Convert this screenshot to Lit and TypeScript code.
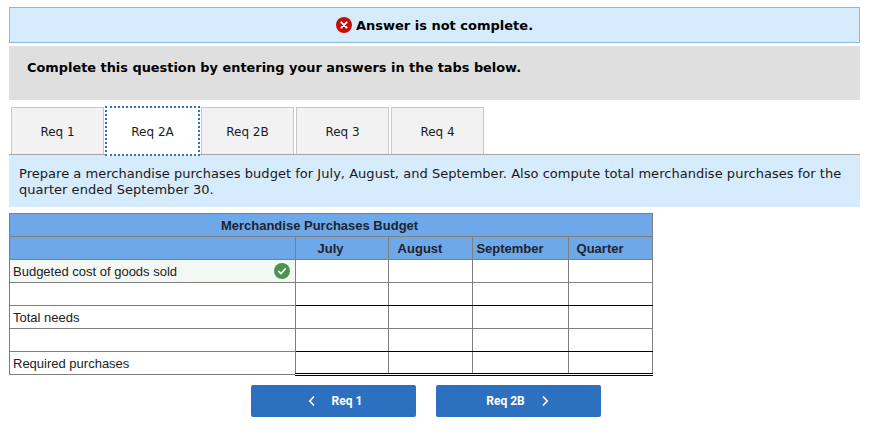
import { LitElement, html, css } from "lit";
import { customElement } from "lit/decorators.js";

const TABS = ["Req 1", "Req 2A", "Req 2B", "Req 3", "Req 4"];
const COLS = ["July", "August", "September", "Quarter"];
const ROWS = [
  { label: "Budgeted cost of goods sold", ok: true, cls: "" },
  { label: "", ok: false, cls: "above" },
  { label: "Total needs", ok: false, cls: "" },
  { label: "", ok: false, cls: "above" },
  { label: "Required purchases", ok: false, cls: "last" },
];

@customElement("app-root")
export class AppRoot extends LitElement {
  static styles = css`
    :host {
      display: block;
      box-sizing: border-box;
      width: 889px;
      height: 434px;
      padding: 7px 29px 0 9px;
      background: #fff;
      font-family: "DejaVu Sans", Verdana, sans-serif;
      color: #1a1a1a;
      overflow: hidden;
    }
    .banner {
      display: flex;
      align-items: center;
      justify-content: center;
      gap: 4px;
      height: 36px;
      box-sizing: border-box;
      background: #d6ebfb;
      border: 1px solid #8ab8de;
      font-size: 13px;
      font-weight: 700;
      color: #000;
    }
    .banner svg {
      display: block;
    }
    .prompt {
      box-sizing: border-box;
      height: 54px;
      margin-top: 3px;
      padding: 13px 18px;
      background: #dfdfdf;
      font-size: 12.9px;
      line-height: 18px;
      font-weight: 700;
      color: #000;
    }
    .tabs {
      display: flex;
      gap: 2px;
      height: 48px;
      box-sizing: border-box;
      margin-top: 7px;
      padding-left: 2px;
      border-bottom: 1px solid #a6a6a6;
    }
    .tab {
      box-sizing: border-box;
      width: 93px;
      height: 47px;
      padding-top: 1px;
      display: flex;
      align-items: center;
      justify-content: center;
      background: #f2f2f2;
      border: 1px solid #c8c8c8;
      border-bottom: none;
      font-size: 12px;
    }
    .tab.active {
      position: relative;
      z-index: 1;
      height: 50px;
      width: 95px;
      margin: -1px -1px 0;
      padding: 2px 0 0;
      background: #fff;
      border: 2px dotted #2d70c0;
    }
    .intro {
      box-sizing: border-box;
      height: 52px;
      padding: 11px 10px 0;
      background: #d6ebfb;
      font-size: 13px;
      line-height: 16px;
      letter-spacing: 0.03px;
    }
    table {
      margin-top: 6px;
      border-collapse: collapse;
      table-layout: fixed;
      width: 643px;
      font-family: "Liberation Sans", Arial, sans-serif;
      font-size: 13px;
      color: #222;
    }
    th,
    td {
      height: 23px;
      box-sizing: border-box;
      padding: 0;
      border: 1px solid #7f7f7f;
    }
    th {
      padding-right: 21px;
      background: #6ea8e8;
      font-size: 13px;
      color: #1c2430;
    }
    th.wide {
      padding-right: 23px;
    }
    td.name {
      padding: 0 3px;
    }
    td.name.ok {
      background: #f3f8f5;
    }
    .name-in {
      display: flex;
      align-items: center;
      justify-content: space-between;
      padding-right: 2px;
    }
    .name-in span {
      padding-top: 1px;
    }
    tr.above td.num {
      border-bottom: 1px solid #000;
    }
    tr.last td.num {
      border-bottom: 3px double #000;
    }
    .nav {
      display: flex;
      gap: 20px;
      margin: 9px 0 0 242px;
    }
    .btn {
      box-sizing: border-box;
      width: 165px;
      height: 32px;
      display: flex;
      align-items: center;
      justify-content: center;
      gap: 16px;
      background: #2d70c0;
      border-radius: 2px;
      font-family: Roboto, sans-serif;
      font-size: 12px;
      font-weight: 700;
      color: #fff;
    }
    .btn.prev {
      padding-left: 3px;
    }
    .btn.next {
      padding-right: 2px;
    }
  `;

  render() {
    return html`
      <div class="banner">
        <svg width="16" height="16" viewBox="0 0 16 16">
          <circle cx="8" cy="8" r="8" fill="#c70a0a" />
          <path d="M5.3 5.3l5.4 5.4M10.7 5.3l-5.4 5.4" stroke="#fff" stroke-width="1.9" stroke-linecap="round" />
        </svg>
        <span>Answer is not complete.</span>
      </div>
      <div class="prompt">Complete this question by entering your answers in the tabs below.</div>
      <div class="tabs">
        ${TABS.map((t, i) => html`<div class="tab ${i === 1 ? "active" : ""}">${t}</div>`)}
      </div>
      <div class="intro">
        Prepare a merchandise purchases budget for July, August, and September. Also compute total merchandise purchases for the quarter ended September 30.
      </div>
      <table>
        <colgroup>
          <col style="width:286px" />
          <col style="width:93px" />
          <col style="width:84px" />
          <col style="width:96px" />
          <col style="width:84px" />
        </colgroup>
        <tr><th class="wide" colspan="5">Merchandise Purchases Budget</th></tr>
        <tr>
          <th></th>
          ${COLS.map((c, i) => html`<th class=${i === 0 ? "wide" : ""}>${c}</th>`)}
        </tr>
        ${ROWS.map(
          (r) => html`<tr class=${r.cls}>
            <td class="name ${r.ok ? "ok" : ""}">
              <div class="name-in">
                <span>${r.label}</span>
                ${r.ok
                  ? html`<svg width="16" height="16" viewBox="0 0 16 16">
                      <circle cx="8" cy="8" r="8" fill="#4a944f" />
                      <path d="M4.6 8.4l2.3 2.2 4.4-4.8" fill="none" stroke="#fff" stroke-width="1.6" stroke-linecap="round" stroke-linejoin="round" />
                    </svg>`
                  : ""}
              </div>
            </td>
            ${COLS.map(() => html`<td class="num"></td>`)}
          </tr>`
        )}
      </table>
      <div class="nav">
        <div class="btn prev">
          <svg width="8" height="12" viewBox="0 0 8 12"><path d="M6 1.5L1.8 6 6 10.5" fill="none" stroke="#fff" stroke-width="1.6" /></svg>
          <span>Req 1</span>
        </div>
        <div class="btn next">
          <span>Req 2B</span>
          <svg width="8" height="12" viewBox="0 0 8 12"><path d="M2 1.5L6.2 6 2 10.5" fill="none" stroke="#fff" stroke-width="1.6" /></svg>
        </div>
      </div>
    `;
  }
}
